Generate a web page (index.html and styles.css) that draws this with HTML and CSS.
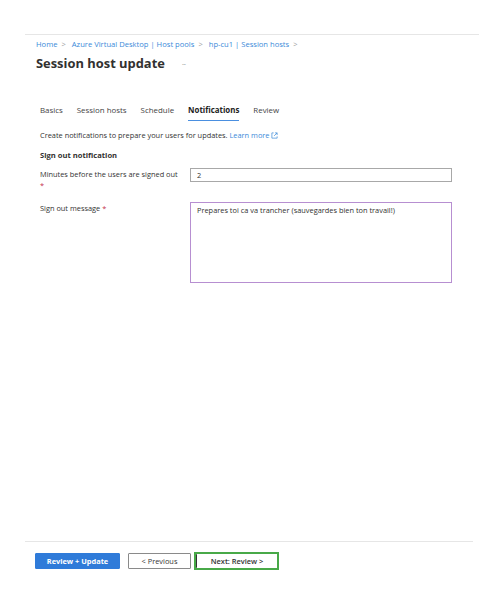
FILE: index.html
```html
<!DOCTYPE html>
<html lang="en">
<head>
    <meta charset="UTF-8">
    <meta name="viewport" content="width=device-width, initial-scale=1.0">
    <title>Session host update</title>
    <link rel="stylesheet" href="styles.css">
</head>
<body>
<div class="page">
    <div class="header">
        <div class="crumbs">
            <a href="#">Home</a><span class="sep">&gt;</span>
            <a href="#">Azure Virtual Desktop | Host pools</a><span class="sep">&gt;</span>
            <a href="#">hp-cu1 | Session hosts</a><span class="sep">&gt;</span>
        </div>
        <div class="title-row">
            <h1>Session host update</h1>
            <span class="more">&middot;&middot;&middot;</span>
        </div>
    </div>

    <div class="content">
        <div class="tabs">
            <span class="tab">Basics</span>
            <span class="tab">Session hosts</span>
            <span class="tab">Schedule</span>
            <span class="tab active">Notifications</span>
            <span class="tab">Review</span>
        </div>

        <p class="intro">Create notifications to prepare your users for updates. <a href="#">Learn more
            <svg class="ext" width="7" height="7" viewBox="0 0 8 8"><path d="M3 1H1v6h6V5M4.5 1H7v2.5M7 1 3.5 4.5" fill="none" stroke="#3b8ad9" stroke-width="0.8"/></svg></a></p>

        <h2>Sign out notification</h2>

        <div class="field">
            <label>Minutes before the users are signed out<span class="req">*</span></label>
            <div class="input">2</div>
        </div>

        <div class="field">
            <label>Sign out message <span class="req-inline">*</span></label>
            <div class="textarea">Prepares toi ca va trancher (sauvegardes bien ton travail!)</div>
        </div>
    </div>

    <div class="footer">
        <button class="btn primary">Review + Update</button>
        <button class="btn">&lt; Previous</button>
        <span class="focus"><button class="btn">Next: Review &gt;</button></span>
    </div>
</div>
</body>
</html>
```

FILE: styles.css
```css
body {
    margin: 0;
    background: #fff;
    font-family: "Open Sans", "Noto Sans", sans-serif;
    color: #323130;
}
.page {
    height: 600px;
    padding: 34px 20px 0 25px;
    box-sizing: border-box;
    display: flex;
    flex-direction: column;
}
.header {
    border-top: 1px solid #e6e6e6;
    padding: 3px 0 0 11px;
}
.crumbs {
    font-size: 7.6px;
    line-height: 12px;
    color: #3b8ad9;
}
.crumbs a {
    color: #3b8ad9;
    text-decoration: none;
}
.crumbs .sep {
    color: #a0a0a0;
    margin: 0 4px;
}
.title-row {
    display: flex;
    align-items: center;
    margin-top: 4px;
}
h1 {
    font-size: 12.9px;
    font-weight: 700;
    margin: 0;
    line-height: 18px;
    color: #323130;
}
.more {
    margin-left: 17px;
    font-size: 8px;
    letter-spacing: -1px;
    color: #999;
}
.content {
    padding: 33px 0 0 15px;
    font-size: 7.4px;
}
.tabs {
    display: flex;
    gap: 14px;
    font-size: 7.9px;
    color: #444;
}
.tab {
    padding-bottom: 5px;
    border-bottom: 1.5px solid transparent;
}
.tab.active {
    font-weight: 700;
    color: #222;
    border-bottom-color: #4a8fe0;
}
.intro {
    margin: 8px 0 0;
    line-height: 12px;
    color: #333;
}
.intro a {
    color: #3b8ad9;
    text-decoration: none;
}
.ext {
    vertical-align: -1px;
}
h2 {
    font-size: 7.6px;
    font-weight: 700;
    margin: 8px 0 0;
    line-height: 12px;
}
.field {
    display: flex;
    margin-top: 7px;
}
.field + .field {
    margin-top: 11px;
}
.field label {
    width: 150px;
    color: #333;
    line-height: 11px;
    padding-top: 1px;
}
.req {
    display: block;
    color: #c4314b;
}
.req-inline {
    color: #c4314b;
}
.input {
    width: 262px;
    height: 14px;
    box-sizing: border-box;
    border: 1px solid #a8a8a8;
    padding: 1px 6px;
    line-height: 11px;
}
.textarea {
    width: 262px;
    height: 81px;
    box-sizing: border-box;
    border: 1px solid #b78fd1;
    padding: 2px 6px;
    line-height: 11px;
}
.footer {
    margin-top: auto;
    margin-bottom: 30px;
    width: 438px;
    border-top: 1px solid #e6e6e6;
    padding: 10px 0 0 10px;
    display: flex;
    align-items: center;
}
.btn {
    font-family: "Open Sans", "Noto Sans", sans-serif;
    font-size: 7.4px;
    height: 16px;
    padding: 0;
    background: #fff;
    border: 1px solid #8a8a8a;
    border-radius: 1px;
    color: #333;
    width: 63px;
    margin-right: 8px;
}
.btn.primary {
    width: 85px;
    background: #2f7bd9;
    border-color: #2f7bd9;
    color: #fff;
    font-weight: 700;
}
.focus {
    display: inline-flex;
    border: 2px solid #48a948;
    margin-left: -5px;
}
.focus .btn {
    width: 81px;
    height: 14px;
    margin: 0;
    border: none;
    border-left: 1px solid #333;
    font-weight: 600;
}
```
